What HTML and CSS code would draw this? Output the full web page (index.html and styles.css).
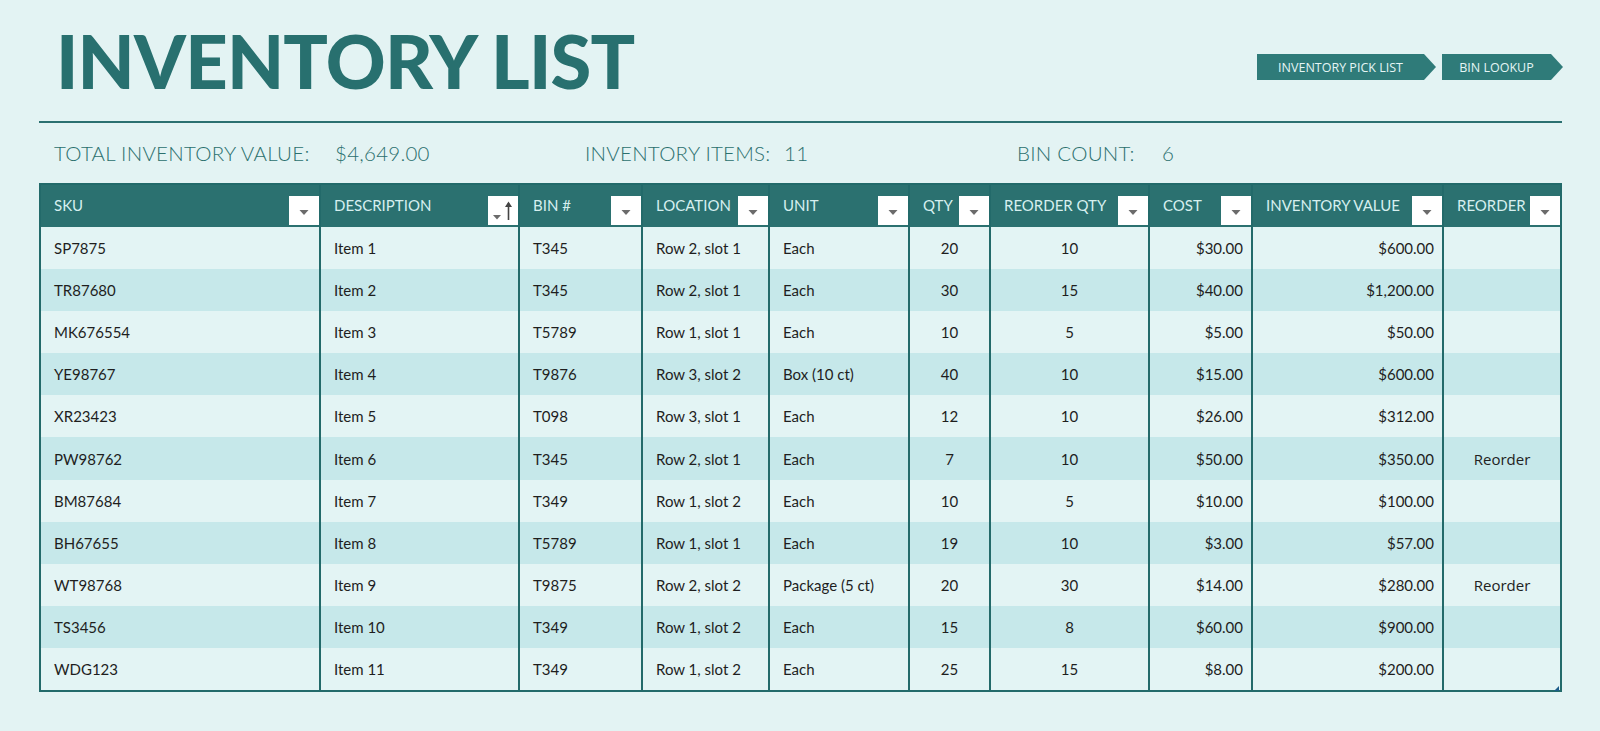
FILE: index.html
```html
<!DOCTYPE html>
<html lang="en">
<head>
<meta charset="utf-8">
<title>Inventory List</title>
<link rel="stylesheet" href="styles.css">
</head>
<body>
<div class="page">
  <header class="top">
    <h1 class="title">INVENTORY LIST</h1>
    <nav class="links">
      <a class="tab tab-pick">INVENTORY PICK LIST</a>
      <a class="tab tab-bin">BIN LOOKUP</a>
    </nav>
  </header>
  <div class="rule"></div>
  <div class="summary">
    <span class="s-label">TOTAL INVENTORY VALUE:</span>
    <span class="s-value">$4,649.00</span>
    <span class="s-label">INVENTORY ITEMS:</span>
    <span class="s-value">11</span>
    <span class="s-label">BIN COUNT:</span>
    <span class="s-value">6</span>
  </div>
  <div class="table-wrap">
  <table class="inv">
    <colgroup>
      <col class="c-sku"><col class="c-desc"><col class="c-bin"><col class="c-loc"><col class="c-unit">
      <col class="c-qty"><col class="c-rqty"><col class="c-cost"><col class="c-val"><col class="c-reo">
    </colgroup>
    <thead>
      <tr>
        <th><div class="hc"><span class="hl">SKU</span><span class="dd"><svg viewBox="0 0 30 29"><polygon points="10.5,14 19.5,14 15,19" fill="#6b6b6b"/></svg></span></div></th>
        <th><div class="hc"><span class="hl">DESCRIPTION</span><span class="dd"><svg viewBox="0 0 30 29"><polygon points="5,19 13,19 9,23.5" fill="#6b6b6b"/><path d="M20.5 24 V7" stroke="#444" stroke-width="1.6"/><polygon points="17,11 24,11 20.5,5.5" fill="#444"/></svg></span></div></th>
        <th><div class="hc"><span class="hl">BIN #</span><span class="dd"><svg viewBox="0 0 30 29"><polygon points="10.5,14 19.5,14 15,19" fill="#6b6b6b"/></svg></span></div></th>
        <th><div class="hc"><span class="hl">LOCATION</span><span class="dd"><svg viewBox="0 0 30 29"><polygon points="10.5,14 19.5,14 15,19" fill="#6b6b6b"/></svg></span></div></th>
        <th><div class="hc"><span class="hl">UNIT</span><span class="dd"><svg viewBox="0 0 30 29"><polygon points="10.5,14 19.5,14 15,19" fill="#6b6b6b"/></svg></span></div></th>
        <th><div class="hc"><span class="hl">QTY</span><span class="dd"><svg viewBox="0 0 30 29"><polygon points="10.5,14 19.5,14 15,19" fill="#6b6b6b"/></svg></span></div></th>
        <th><div class="hc"><span class="hl">REORDER QTY</span><span class="dd"><svg viewBox="0 0 30 29"><polygon points="10.5,14 19.5,14 15,19" fill="#6b6b6b"/></svg></span></div></th>
        <th><div class="hc"><span class="hl">COST</span><span class="dd"><svg viewBox="0 0 30 29"><polygon points="10.5,14 19.5,14 15,19" fill="#6b6b6b"/></svg></span></div></th>
        <th><div class="hc"><span class="hl">INVENTORY VALUE</span><span class="dd"><svg viewBox="0 0 30 29"><polygon points="10.5,14 19.5,14 15,19" fill="#6b6b6b"/></svg></span></div></th>
        <th><div class="hc"><span class="hl">REORDER</span><span class="dd"><svg viewBox="0 0 30 29"><polygon points="10.5,14 19.5,14 15,19" fill="#6b6b6b"/></svg></span></div></th>
      </tr>
    </thead>
    <tbody>
      <tr><td>SP7875</td><td>Item 1</td><td>T345</td><td>Row 2, slot 1</td><td>Each</td><td class="ctr">20</td><td class="ctr">10</td><td class="num">$30.00</td><td class="num">$600.00</td><td class="reo"></td></tr>
      <tr><td>TR87680</td><td>Item 2</td><td>T345</td><td>Row 2, slot 1</td><td>Each</td><td class="ctr">30</td><td class="ctr">15</td><td class="num">$40.00</td><td class="num">$1,200.00</td><td class="reo"></td></tr>
      <tr><td>MK676554</td><td>Item 3</td><td>T5789</td><td>Row 1, slot 1</td><td>Each</td><td class="ctr">10</td><td class="ctr">5</td><td class="num">$5.00</td><td class="num">$50.00</td><td class="reo"></td></tr>
      <tr><td>YE98767</td><td>Item 4</td><td>T9876</td><td>Row 3, slot 2</td><td>Box (10 ct)</td><td class="ctr">40</td><td class="ctr">10</td><td class="num">$15.00</td><td class="num">$600.00</td><td class="reo"></td></tr>
      <tr><td>XR23423</td><td>Item 5</td><td>T098</td><td>Row 3, slot 1</td><td>Each</td><td class="ctr">12</td><td class="ctr">10</td><td class="num">$26.00</td><td class="num">$312.00</td><td class="reo"></td></tr>
      <tr><td>PW98762</td><td>Item 6</td><td>T345</td><td>Row 2, slot 1</td><td>Each</td><td class="ctr">7</td><td class="ctr">10</td><td class="num">$50.00</td><td class="num">$350.00</td><td class="reo">Reorder</td></tr>
      <tr><td>BM87684</td><td>Item 7</td><td>T349</td><td>Row 1, slot 2</td><td>Each</td><td class="ctr">10</td><td class="ctr">5</td><td class="num">$10.00</td><td class="num">$100.00</td><td class="reo"></td></tr>
      <tr><td>BH67655</td><td>Item 8</td><td>T5789</td><td>Row 1, slot 1</td><td>Each</td><td class="ctr">19</td><td class="ctr">10</td><td class="num">$3.00</td><td class="num">$57.00</td><td class="reo"></td></tr>
      <tr><td>WT98768</td><td>Item 9</td><td>T9875</td><td>Row 2, slot 2</td><td>Package (5 ct)</td><td class="ctr">20</td><td class="ctr">30</td><td class="num">$14.00</td><td class="num">$280.00</td><td class="reo">Reorder</td></tr>
      <tr><td>TS3456</td><td>Item 10</td><td>T349</td><td>Row 1, slot 2</td><td>Each</td><td class="ctr">15</td><td class="ctr">8</td><td class="num">$60.00</td><td class="num">$900.00</td><td class="reo"></td></tr>
      <tr><td>WDG123</td><td>Item 11</td><td>T349</td><td>Row 1, slot 2</td><td>Each</td><td class="ctr">25</td><td class="ctr">15</td><td class="num">$8.00</td><td class="num">$200.00</td><td class="reo"></td></tr>
    </tbody>
  </table>
  <span class="corner"></span>
  </div>
</div>
</body>
</html>
```

FILE: styles.css
```css
html, body {
  margin: 0;
  padding: 0;
}
body {
  background: #e3f3f3;
  font-family: Lato, "Open Sans", sans-serif;
  color: #222;
}
.page {
  width: 1600px;
  height: 731px;
  overflow: hidden;
}
.top {
  display: flex;
  justify-content: space-between;
  align-items: flex-start;
  height: 98px;
  padding: 24px 37px 0 56px;
  box-sizing: border-box;
}
.title {
  margin: 0;
  font-family: Lato, sans-serif;
  font-weight: 900;
  font-size: 74px;
  line-height: 74px;
  color: #28706f;
  letter-spacing: -0.8px;
}
.links {
  display: flex;
  gap: 6px;
  margin-top: 30px;
}
.tab {
  display: flex;
  align-items: center;
  justify-content: center;
  height: 26px;
  padding-right: 12px;
  box-sizing: border-box;
  background: #2f7b79;
  color: #e4f5f5;
  font-family: "Open Sans", sans-serif;
  font-size: 12.5px;
  clip-path: polygon(0 0, calc(100% - 12px) 0, 100% 50%, calc(100% - 12px) 100%, 0 100%);
}
.tab-pick { width: 179px; }
.tab-bin { width: 121px; }
.rule {
  margin: 0 38px 0 39px;
  height: 2px;
  background: #2b7070;
  margin-top: 23px;
}
.summary {
  display: grid;
  grid-template-columns: 281px 250px 199px 233px 145px auto;
  padding: 18px 0 18px 54px;
  font-family: Lato, sans-serif;
  font-weight: 300;
  font-size: 20.5px;
  line-height: 24px;
  letter-spacing: 0.25px;
  color: #2b706e;
}
.table-wrap {
  position: relative;
  margin-left: 39px;
  width: 1521px;
}
.inv {
  width: 1521px;
  table-layout: fixed;
  border-collapse: collapse;
  border: 2px solid #236a6a;
}
.c-sku { width: 280px; }
.c-desc { width: 199px; }
.c-bin { width: 123px; }
.c-loc { width: 127px; }
.c-unit { width: 140px; }
.c-qty { width: 81px; }
.c-rqty { width: 159px; }
.c-cost { width: 103px; }
.c-val { width: 191px; }
.c-reo { width: 118px; }
.inv th {
  height: 42px;
  padding: 0;
  background: #2b7170;
  border-left: 2px solid #236a6a;
  vertical-align: top;
}
.hc {
  display: flex;
  justify-content: space-between;
  height: 42px;
}
.hl {
  align-self: center;
  padding-left: 13px;
  margin-top: -2px;
  font-family: Lato, sans-serif;
  font-weight: 400;
  font-size: 15px;
  color: #d6efef;
  white-space: nowrap;
}
.dd {
  align-self: flex-end;
  margin-bottom: 2px;
  width: 30px;
  height: 29px;
  background: #fff;
  flex: none;
}
.dd svg {
  display: block;
  width: 30px;
  height: 29px;
}
.inv td {
  height: 42.1px;
  padding: 0 8px 0 13px;
  border-left: 2px solid #236a6a;
  font-family: Lato, sans-serif;
  font-size: 15px;
  color: #1e1e1e;
  white-space: nowrap;
}
.inv tbody tr:nth-child(odd) td { background: #e3f4f4; }
.inv tbody tr:nth-child(even) td { background: #c6e8ea; }
.inv td.ctr { text-align: center; padding: 0 4px; }
.inv td.num { text-align: right; }
.inv td.reo {
  text-align: center;
  padding: 0;
  font-family: "Open Sans", sans-serif;
  font-size: 15px;
  color: #222;
}
.corner {
  position: absolute;
  right: 1px;
  bottom: 1px;
  width: 0;
  height: 0;
  border-left: 5px solid transparent;
  border-bottom: 5px solid #1d5c8a;
}
```
